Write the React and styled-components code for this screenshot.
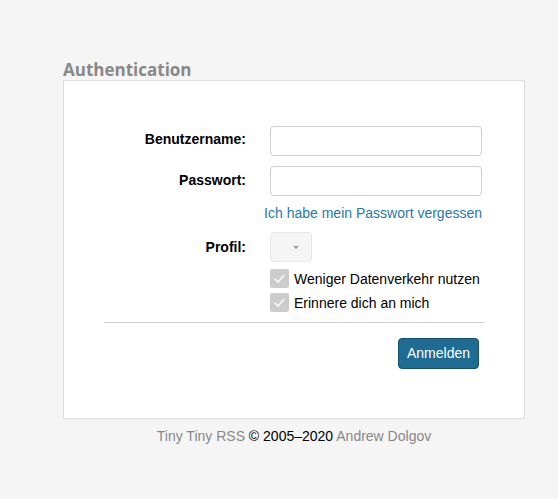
import React from "react";
import styled, { createGlobalStyle } from "styled-components";

const Global = createGlobalStyle`
  html, body { margin: 0; padding: 0; background: #f5f5f5; }
  body { font-family: "Liberation Sans", Arial, sans-serif; font-size: 14px; color: #000; }
`;

const Page = styled.div`
  padding: 58px 0 0 63px;
  width: 462px;
`;

const Title = styled.h1`
  margin: 0;
  font-family: "Open Sans", "Noto Sans", sans-serif;
  font-weight: 700;
  font-size: 17px;
  line-height: 22px;
  color: #888;
  transform: translateY(1px);
`;

const Panel = styled.div`
  background: #fff;
  border: 1px solid #ddd;
  padding: 45px 40px 49px 40px;
`;

const Row = styled.div`
  display: flex;
  align-items: center;
  margin-bottom: ${(p) => p.$mb ?? 10}px;
`;

const Label = styled.label`
  width: 142px;
  margin-right: 24px;
  text-align: right;
  font-weight: 700;
  font-size: 14px;
  padding-bottom: ${(p) => p.$lift ?? 0}px;
`;

const Field = styled.div`
  width: 212px;
  display: flex;
  flex-direction: column;
  align-items: ${(p) => (p.$end ? "flex-end" : "flex-start")};
`;

const Input = styled.input`
  box-sizing: border-box;
  width: 212px;
  height: 30px;
  border: 1px solid #ccc;
  border-radius: 4px;
  background: #fff;
  padding: 4px 8px;
  font: inherit;
  outline: none;
`;

const Link = styled.a`
  color: #257aa7;
  text-decoration: none;
  font-size: 14px;
  white-space: nowrap;
  line-height: 18px;
`;

const Select = styled.div`
  box-sizing: border-box;
  width: 42px;
  height: 30px;
  border: 1px solid #e6e6e6;
  border-radius: 4px;
  background: #f5f5f5;
  display: flex;
  align-items: center;
  justify-content: center;
  padding-left: 10px;
`;

const Caret = styled.span`
  width: 0;
  height: 0;
  border-left: 3px solid transparent;
  border-right: 3px solid transparent;
  border-top: 3px solid #999;
`;

const Check = styled.div`
  display: flex;
  align-items: center;
  gap: 5px;
  height: 19px;
  margin-bottom: ${(p) => p.$mb ?? 0}px;
`;

const Box = styled.span`
  box-sizing: border-box;
  width: 19px;
  height: 19px;
  border-radius: 2px;
  background: #ccc;
  display: flex;
  align-items: center;
  justify-content: center;
`;

const Divider = styled.hr`
  margin: 10px 0 15px 0;
  border: none;
  border-top: 1px solid #ccc;
  height: 0;
`;

const Actions = styled.div`
  display: flex;
  justify-content: flex-end;
  padding-right: 5px;
`;

const Button = styled.button`
  box-sizing: border-box;
  height: 31px;
  padding: 0 8px 2px;
  background: #1e6b93;
  color: #fff;
  border: 1px solid #16516f;
  border-radius: 4px;
  font-family: "Liberation Sans", Arial, sans-serif;
  font-size: 14px;
`;

const Footer = styled.div`
  text-align: center;
  margin-top: 9px;
  font-size: 14px;
  color: #000;
`;

const Muted = styled.span`
  color: #888;
`;

const Tick = () => (
  <svg width="11" height="9" viewBox="0 0 11 9">
    <path d="M1 5 L4 8 L10 1.5" fill="none" stroke="#fff" strokeWidth="1.4" strokeLinecap="round" strokeLinejoin="round" />
  </svg>
);

export default function App() {
  return (
    <>
      <Global />
      <Page>
        <Title>Authentication</Title>
        <Panel>
          <Row>
            <Label $lift={4}>Benutzername:</Label>
            <Field><Input type="text" /></Field>
          </Row>
          <Row $mb={8}>
            <Label $lift={2}>Passwort:</Label>
            <Field><Input type="password" /></Field>
          </Row>
          <Row $mb={10}>
            <Label />
            <Field $end><Link href="#">Ich habe mein Passwort vergessen</Link></Field>
          </Row>
          <Row $mb={7}>
            <Label>Profil:</Label>
            <Field><Select><Caret /></Select></Field>
          </Row>
          <Row $mb={0}>
            <Label />
            <Field>
              <Check $mb={5}><Box><Tick /></Box>Weniger Datenverkehr nutzen</Check>
              <Check><Box><Tick /></Box>Erinnere dich an mich</Check>
            </Field>
          </Row>
          <Divider />
          <Actions>
            <Button>Anmelden</Button>
          </Actions>
        </Panel>
        <Footer>
          <Muted>Tiny Tiny RSS</Muted> © 2005–2020 <Muted>Andrew Dolgov</Muted>
        </Footer>
      </Page>
    </>
  );
}
